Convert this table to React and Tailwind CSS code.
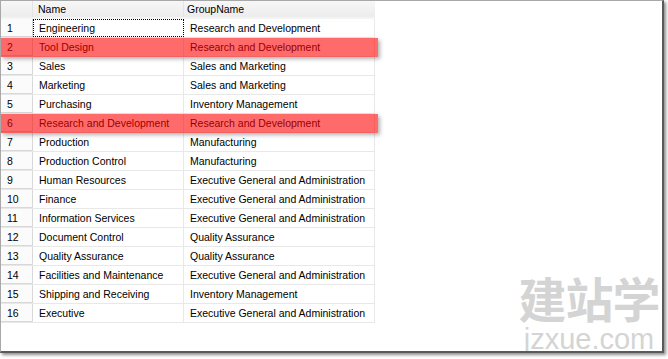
import React from 'react';

const rows = [
  ['Engineering', 'Research and Development'],
  ['Tool Design', 'Research and Development'],
  ['Sales', 'Sales and Marketing'],
  ['Marketing', 'Sales and Marketing'],
  ['Purchasing', 'Inventory Management'],
  ['Research and Development', 'Research and Development'],
  ['Production', 'Manufacturing'],
  ['Production Control', 'Manufacturing'],
  ['Human Resources', 'Executive General and Administration'],
  ['Finance', 'Executive General and Administration'],
  ['Information Services', 'Executive General and Administration'],
  ['Document Control', 'Quality Assurance'],
  ['Quality Assurance', 'Quality Assurance'],
  ['Facilities and Maintenance', 'Executive General and Administration'],
  ['Shipping and Receiving', 'Inventory Management'],
  ['Executive', 'Executive General and Administration'],
];

const highlighted = [2, 6];

const App = () => {
  return (
    <div className="w-[668px] h-[359px] bg-white font-['Liberation_Sans',Arial,sans-serif] text-[10.5px] text-black">
      <div className="relative w-[664px] h-[353px] bg-white border-l border-t border-[#a8a8a8] border-r-2 border-b-2 border-r-[#5a5a5a] border-b-[#5a5a5a] shadow-[2px_2px_3px_rgba(0,0,0,0.45)] overflow-hidden">
        <div className="w-[374px]">
          <div className="flex h-[18px] bg-gradient-to-b from-[#f7f7f7] to-[#ececec] border-b-2 border-[#f4f4f4]">
            <div className="w-[32px] border-r border-[#e4e4e4]" />
            <div className="w-[151px] pl-[5px] leading-[16px] border-r border-[#e4e4e4]">Name</div>
            <div className="flex-1 pl-[3px] leading-[16px]">GroupName</div>
          </div>
          {rows.map((r, i) => (
            <div key={i} className="flex h-[19px] border-b border-[#e8e8e8]">
              <div className="w-[32px] pl-[6px] leading-[19px] border-r border-b border-[#d8d8d8] bg-[#fbfbfb]">{i + 1}</div>
              <div
                className={
                  i === 0
                    ? 'w-[151px] pl-[5px] leading-[17px] border border-dotted border-black whitespace-nowrap'
                    : 'w-[151px] pl-[6px] leading-[19px] border-r border-[#e8e8e8] whitespace-nowrap'
                }
              >
                {r[0]}
              </div>
              <div className="flex-1 pl-[6px] leading-[19px] border-r border-[#e8e8e8] whitespace-nowrap">{r[1]}</div>
            </div>
          ))}
        </div>

        {highlighted.map((n) => (
          <div
            key={n}
            className="absolute left-0 w-[377px] h-[19px] bg-[rgba(255,0,0,0.58)] shadow-[2px_2px_4px_rgba(0,0,0,0.3)]"
            style={{ top: 18 + (n - 1) * 19 }}
          />
        ))}

        <div className="absolute left-[512px] top-[270px] w-[152px] flex flex-col items-center text-[#d4d4d4] whitespace-nowrap">
          <div className="text-[48px] leading-[52px] font-bold tracking-[-1px] font-['Noto_Sans_CJK_SC',sans-serif]">建站学</div>
          <div className="text-[29px] leading-[32px] font-['Liberation_Sans',Arial,sans-serif]">jzxue.com</div>
        </div>
      </div>
    </div>
  );
};

export default App;
